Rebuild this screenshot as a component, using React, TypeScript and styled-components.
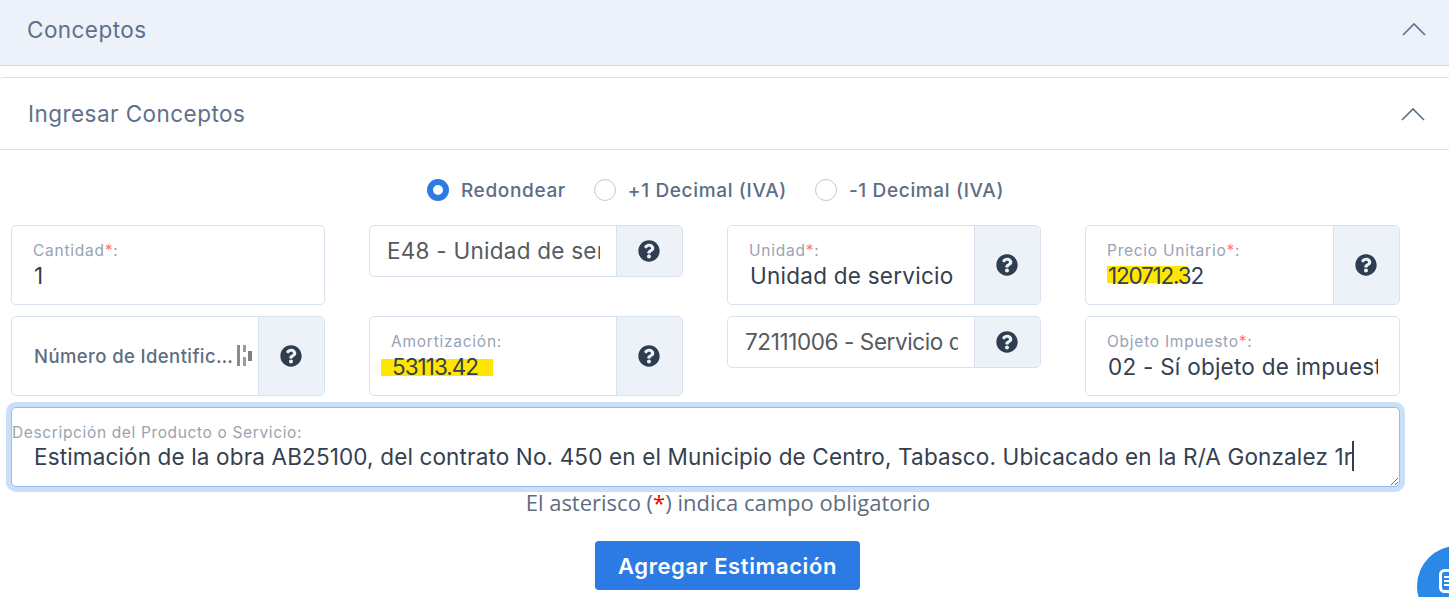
import { createGlobalStyle, styled } from "styled-components";
import { FaQuestionCircle } from "react-icons/fa";

const GlobalStyle = createGlobalStyle`
  html, body {
    margin: 0;
    padding: 0;
    background: #fff;
    overflow: hidden;
  }
  * { box-sizing: border-box; }
`;

const Page = styled.div`
  position: relative;
  width: 1449px;
  height: 597px;
  overflow: hidden;
  font-family: Inter, "Noto Sans", sans-serif;
`;

const AccordionHeader = styled.div<{ $tinted?: boolean }>`
  display: flex;
  align-items: center;
  justify-content: space-between;
  height: ${(p) => (p.$tinted ? "66px" : "73px")};
  margin-top: ${(p) => (p.$tinted ? "0" : "11px")};
  padding: 0 ${(p) => (p.$tinted ? "23px" : "24px")} ${(p) => (p.$tinted ? "7px" : "0")} ${(p) => (p.$tinted ? "27px" : "28px")};
  background: ${(p) => (p.$tinted ? "#edf2fa" : "#fff")};
  border-bottom: 1px solid ${(p) => (p.$tinted ? "#d6d9dd" : "#dfe1e4")};
  border-top: ${(p) => (p.$tinted ? "none" : "1px solid #dfe1e4")};
  border-top-left-radius: ${(p) => (p.$tinted ? "0" : "3px")};
  color: #5f7189;
  font-size: 22.5px;
  letter-spacing: 0.45px;
`;

const RadioRow = styled.div`
  display: flex;
  justify-content: center;
  align-items: center;
  gap: 28px;
  height: 22px;
  margin: 29px 0 24px -18px;
`;

const RadioOption = styled.label`
  display: flex;
  align-items: center;
  gap: 12px;
  color: #5c6d85;
  font-size: 19px;
  font-weight: 500;
  letter-spacing: 0.65px;
`;

const RadioDot = styled.span<{ $checked?: boolean }>`
  width: 22px;
  height: 22px;
  border-radius: 50%;
  background: #fff;
  border: ${(p) => (p.$checked ? "6px solid #2c7be5" : "1px solid #bfc9d8")};
`;

const FieldGrid = styled.div`
  display: grid;
  grid-template-columns: 314px 314px 314px 315px;
  column-gap: 44px;
  row-gap: 11px;
  padding: 0 49px 0 11px;
`;

const InputGroup = styled.div<{ $short?: boolean }>`
  display: flex;
  height: ${(p) => (p.$short ? "52px" : "80px")};
  border: 1px solid #d8e2ef;
  border-radius: 5px;
  overflow: hidden;
  background: #fff;
`;

const FieldBody = styled.div<{ $short?: boolean }>`
  position: relative;
  flex: 1;
  min-width: 0;
  display: flex;
  flex-direction: column;
  justify-content: center;
  padding: 0 ${(p) => (p.$short ? "16px" : "21px")} 0 ${(p) => (p.$short ? "17px" : "22px")};
`;

const Label = styled.span`
  color: #98a3b3;
  font-size: 15.5px;
  line-height: 20px;
  letter-spacing: 0.75px;
  margin: 1px 0 0 -1px;
`;

const Star = styled.span`
  color: #f77;
`;

const Value = styled.input<{ $muted?: boolean; $spacing?: number }>`
  position: relative;
  width: 100%;
  border: none;
  outline: none;
  padding: 0;
  background: transparent;
  font-family: inherit;
  font-size: 22.5px;
  line-height: 30px;
  height: 30px;
  letter-spacing: ${(p) => p.$spacing ?? 0.25}px;
  color: ${(p) => (p.$muted ? "#555a60" : "#344050")};
`;

const Placeholder = styled.span`
  color: #5e6e82;
  font-size: 18.5px;
  font-weight: 500;
  letter-spacing: 0.4px;
  white-space: nowrap;
`;

const KeyIcon = styled.svg`
  position: absolute;
  right: 5px;
  top: 50%;
  margin-top: -11px;
`;

const Highlight = styled.span<{ $left: number; $width: number; $top: number }>`
  position: absolute;
  left: ${(p) => p.$left}px;
  top: ${(p) => p.$top}px;
  width: ${(p) => p.$width}px;
  height: 17px;
  background: #ffe600;
`;

const Addon = styled.div`
  flex: none;
  width: 66px;
  display: flex;
  align-items: center;
  justify-content: center;
  padding-right: 2px;
  background: #edf2f9;
  border-left: 1px solid #d8e2ef;
  color: #2f3d50;
  font-size: 22px;
`;

const TextAreaWrap = styled.div`
  position: relative;
  margin: 11px 49px 0 11px;
`;

const DescArea = styled.textarea`
  display: block;
  width: 100%;
  height: 80px;
  padding: 34px 20px 0 22px;
  border: 1px solid #96bdf2;
  border-radius: 5px;
  outline: none;
  box-shadow: 0 0 0 5px #cbdff8;
  font-family: inherit;
  font-size: 22.5px;
  line-height: 30px;
  letter-spacing: 0.145px;
  color: #344050;
  overflow: hidden;
  white-space: nowrap;
  resize: both;
`;

const DescLabel = styled.span`
  position: absolute;
  left: 1px;
  top: 16px;
  color: #98a3b3;
  font-size: 15.5px;
  line-height: 20px;
  letter-spacing: 0.64px;
`;

const Caret = styled.span`
  position: absolute;
  left: 1341px;
  top: 34px;
  width: 2px;
  height: 30px;
  background: #344050;
`;

const Note = styled.p`
  margin: 0;
  text-align: center;
  color: #5e6e82;
  font-family: "Open Sans", sans-serif;
  font-size: 22px;
  line-height: 30px;
  padding-left: 7px;
`;

const NoteStar = styled.span`
  color: #e00;
`;

const ButtonRow = styled.div`
  display: flex;
  justify-content: center;
  margin-top: 24px;
  padding-left: 6px;
`;

const SubmitButton = styled.button`
  width: 265px;
  height: 49px;
  border: none;
  border-radius: 4px;
  background: #2c7be5;
  color: #fff;
  font-family: inherit;
  font-size: 22px;
  font-weight: 600;
  letter-spacing: 0.6px;
`;

const FloatingButton = styled.div`
  position: absolute;
  left: 1417px;
  top: 546px;
  width: 80px;
  height: 80px;
  border-radius: 50%;
  background: #2b88e6;
`;

const FloatingGlyph = styled.svg`
  position: absolute;
  left: 22px;
  top: 23px;
`;

const Chevron = () => (
  <svg width="24" height="14" viewBox="0 0 24 14" fill="none">
    <path d="M1 13 L12 2 L23 13" stroke="#5f7189" strokeWidth="1.6" />
  </svg>
);

const Help = () => (
  <Addon>
    <FaQuestionCircle />
  </Addon>
);

const App = () => {
  return (
    <Page>
      <GlobalStyle />
      <AccordionHeader $tinted>
        Conceptos
        <Chevron />
      </AccordionHeader>
      <AccordionHeader>
        Ingresar Conceptos
        <Chevron />
      </AccordionHeader>

      <RadioRow>
        <RadioOption><RadioDot $checked />Redondear</RadioOption>
        <RadioOption><RadioDot />+1 Decimal (IVA)</RadioOption>
        <RadioOption><RadioDot />-1 Decimal (IVA)</RadioOption>
      </RadioRow>

      <FieldGrid>
        <InputGroup>
          <FieldBody>
            <Label>Cantidad<Star>*</Star>:</Label>
            <Value readOnly value="1" />
          </FieldBody>
        </InputGroup>
        <InputGroup $short>
          <FieldBody $short>
            <Value readOnly $muted value="E48 - Unidad de servicio" />
          </FieldBody>
          <Help />
        </InputGroup>
        <InputGroup>
          <FieldBody>
            <Label>Unidad<Star>*</Star>:</Label>
            <Value readOnly value="Unidad de servicio" />
          </FieldBody>
          <Help />
        </InputGroup>
        <InputGroup>
          <FieldBody>
            <Highlight $left={21} $top={40} $width={81} />
            <Label>Precio Unitario<Star>*</Star>:</Label>
            <Value readOnly $spacing={-1.2} value="120712.32" />
          </FieldBody>
          <Help />
        </InputGroup>

        <InputGroup>
          <FieldBody>
            <Placeholder>Número de Identific…</Placeholder>
            <KeyIcon width="16" height="21" viewBox="0 0 16 21">
              <path d="M0 0h3v21H0z" fill="#8f8b8b" />
              <path d="M6 0h3v7H6zM6 12h3v9H6z" fill="#a09a96" />
              <path d="M11 6h4v10h-4z" fill="#7d8088" />
            </KeyIcon>
          </FieldBody>
          <Help />
        </InputGroup>
        <InputGroup>
          <FieldBody>
            <Highlight $left={11} $top={42} $width={112} />
            <Label>Amortización:</Label>
            <Value readOnly $spacing={-1} value="53113.42" />
          </FieldBody>
          <Help />
        </InputGroup>
        <InputGroup $short>
          <FieldBody $short>
            <Value readOnly $muted $spacing={-0.4} value="72111006 - Servicio de construcción" />
          </FieldBody>
          <Help />
        </InputGroup>
        <InputGroup>
          <FieldBody>
            <Label>Objeto Impuesto<Star>*</Star>:</Label>
            <Value readOnly value="02 - Sí objeto de impuesto" />
          </FieldBody>
        </InputGroup>
      </FieldGrid>

      <TextAreaWrap>
        <DescArea
          readOnly
          value="Estimación de la obra AB25100, del contrato No. 450 en el Municipio de Centro, Tabasco. Ubicacado en la R/A Gonzalez 1r"
        />
        <DescLabel>Descripción del Producto o Servicio:</DescLabel>
        <Caret />
      </TextAreaWrap>

      <Note>El asterisco (<NoteStar>*</NoteStar>) indica campo obligatorio</Note>
      <ButtonRow>
        <SubmitButton type="button">Agregar Estimación</SubmitButton>
      </ButtonRow>

      <FloatingButton>
        <FloatingGlyph width="24" height="24" viewBox="0 0 24 24" fill="none">
          <rect x="1.5" y="1.5" width="21" height="21" rx="4" stroke="#fff" strokeWidth="3" />
          <path d="M5 8h6M5 12h6M5 16h6" stroke="#fff" strokeWidth="2" />
        </FloatingGlyph>
      </FloatingButton>
    </Page>
  );
};

export default App;
